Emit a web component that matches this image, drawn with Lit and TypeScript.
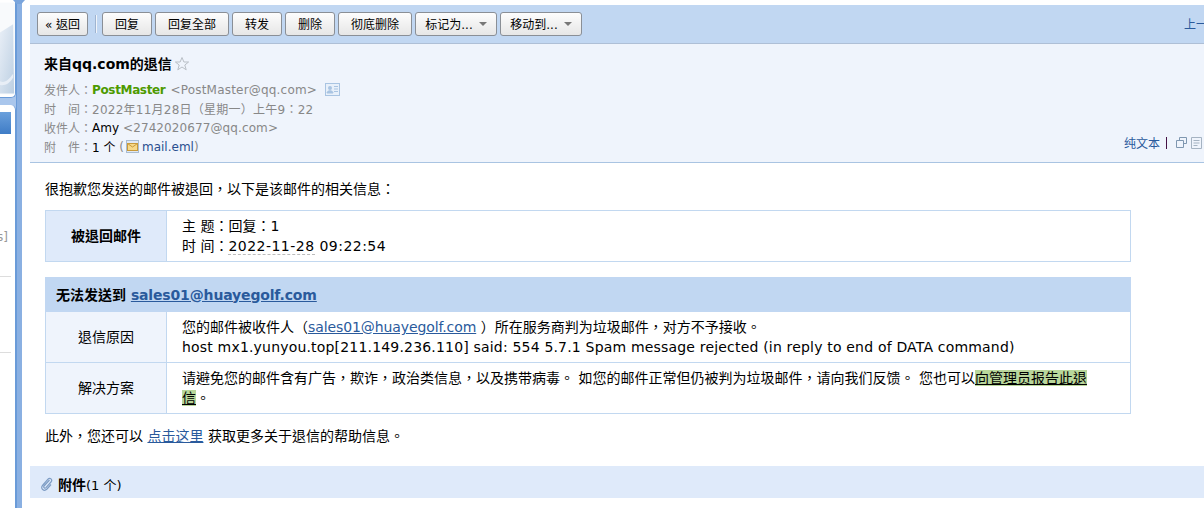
import { LitElement, html, css, svg } from "lit";
import { customElement } from "lit/decorators.js";

@customElement("app-root")
export class AppRoot extends LitElement {
  static styles = css`
    :host { display: block; width: 1204px; height: 508px; overflow: hidden; background: #fff; font-family: "DejaVu Sans", "Noto Sans CJK TC", sans-serif; font-size: 14px; color: #000; }
    .page { display: flex; height: 508px; }
    .side { width: 16px; flex: none; display: flex; flex-direction: column; background: #a9c6ec; }
    .art { height: 98px; flex: none; display: block; border-radius: 0 0 5px 0; border-right: 1px solid #6a9bd8; border-bottom: 1px solid #6a9bd8; box-sizing: border-box; background: #fff; }
    .sidenav { margin-top: 7px; flex: 1; background: #fff; border-radius: 0 5px 0 0; border-right: 1px solid #6a9bd8; }
    .sel { margin-top: 7px; height: 22px; width: 11px; background: linear-gradient(#6aa0dc, #3f7cc6); }
    .frag { margin-top: 95px; color: #999; font-size: 12px; line-height: 16px; width: 8px; overflow: hidden; display: flex; justify-content: flex-end; white-space: nowrap; }
    .sep { margin-top: 31px; height: 1px; width: 11px; background: #ddd; }
    .sep2 { margin-top: 75px; height: 1px; width: 11px; background: #ddd; }
    .rail { width: 6px; flex: none; background: #8ab0e2; border-left: 1px solid #6a9bd8; box-sizing: border-box; position: relative; }
    .flare { position: absolute; left: -4px; top: 0; width: 12px; height: 4px; background: #7aa5dc; clip-path: polygon(0 0, 100% 0, 70% 100%, 30% 100%); }
    .gap { width: 8px; flex: none; }
    .main { flex: 1; min-width: 0; padding-top: 5px; }
    .toolbar { height: 39px; box-sizing: border-box; background: #c1d7f2; border-bottom: 1px solid #aebfd6; display: flex; align-items: center; padding: 0 0 1px 7px; }
    .btn { height: 24px; box-sizing: border-box; border: 1px solid #8a8f96; border-radius: 3px; background: linear-gradient(#fdfdfd, #e6e6e6); font-size: 12px; display: flex; align-items: center; justify-content: center; margin-right: 3px; white-space: nowrap; flex: none; }
    .w51 { width: 51px; }
    .w50 { width: 50px; }
    .w74 { width: 74px; }
    .w82 { width: 82px; }
    .vsep { width: 1px; height: 18px; background: #f0f4fa; border-left: 1px solid #9fb4d0; margin: 0 5px 0 4px; flex: none; }
    .caret { width: 0; height: 0; border-left: 4px solid transparent; border-right: 4px solid transparent; border-top: 4px solid #777; margin-left: 6px; }
    .prev { margin-left: auto; color: #2a5a9c; font-size: 12px; width: 20px; overflow: hidden; white-space: nowrap; flex: none; }
    .head { height: 119px; box-sizing: border-box; background: #eff4fc; border-bottom: 1px solid #a9c4e2; padding: 10px 14px 0; position: relative; color: #888; font-size: 12px; }
    .title { display: flex; align-items: center; font-size: 14px; font-weight: bold; color: #000; height: 18px; margin-bottom: 8px; }
    .title svg { margin: 2px 0 0 2px; }
    .row { display: flex; align-items: center; height: 19px; white-space: nowrap; }
    .lab { color: #8a8a8a; }
    .name { color: #4d9a00; font-weight: bold; letter-spacing: -.35px; }
    .addr { letter-spacing: .2px; margin-left: 5px; }
    .addr2 { letter-spacing: .1px; margin-left: 4px; }
    .date { letter-spacing: .25px; }
    .blk { color: #000; }
    .lnk { color: #2a4f8f; }
    .card { margin-left: 8px; }
    .env { margin: 0 2px 0 1px; }
    .tools { position: absolute; right: 2px; bottom: 11px; display: flex; align-items: center; font-size: 12px; color: #2a5a9c; }
    .bar { width: 1px; height: 12px; background: #441144; margin: 0 9px 0 6px; }
    .tools svg { margin-right: 4px; }
    .tools svg:last-child { margin-right: 0; }
    .body { padding: 16px 15px 0; font-size: 14px; }
    .line { height: 20px; line-height: 20px; white-space: nowrap; }
    .tb { width: 1086px; border-collapse: collapse; font-size: 14px; line-height: 20px; table-layout: fixed; }
    .tb td { border: 1px solid #c2d8f0; padding: 0; box-sizing: border-box; }
    .t1 { margin-top: 11px; }
    .t2 { margin-top: 15px; }
    .c1 { width: 121px; }
    .r52 td { height: 51px; }
    .r51 td { height: 51px; }
    .r34 td { height: 34px; }
    .tb td.th { text-align: center; background: #eff4fc; }
    .tb td.th.b { font-weight: bold; background: #dfeafa; }
    .tb td.td { padding: 0 35px 0 15px; }
    .tb td.hdr { background: #c1d7f2; font-weight: bold; padding-left: 10px; border-color: #c1d7f2; }
    .hdr a { letter-spacing: -.15px; }
    a { color: #2a5a9c; text-decoration: underline; }
    .mail { letter-spacing: -.1px; }
    .smtp { letter-spacing: .185px; }
    .dash { border-bottom: 1px dashed #bbb; }
    .stamp { letter-spacing: .47px; }
    mark { background: #b9d79b; color: #000; text-decoration: underline; }
    .foot { margin-top: 12px; }
    .att { margin-top: 20px; background: #dfeafa; display: flex; align-items: center; height: 32px; font-size: 13px; padding: 4px 0 0 10px; box-sizing: border-box; }
    .att b { margin-left: 4px; font-size: 14px; }
    .attbody { height: 10px; margin: 0 0 0 2px; background: #fff; }
  `;

  render() {
    const star = svg`<path d="M8 1.500 9.900 6h4.700l-3.800 3 1.400 4.800L8 11l-4.200 2.800L5.200 9 1.400 6h4.700z" fill="none" stroke="#b9bfc6"/>`;
    return html`<div class="page">
      <div class="side">
        <svg class="art" width="16" height="98" viewBox="0 0 16 98">
          <defs><linearGradient id="g" x1="0" y1="0" x2="1" y2="1"><stop offset="0" stop-color="#e9eff7"/><stop offset="1" stop-color="#bccfe2"/></linearGradient></defs>
          <rect width="16" height="98" fill="#f8fafc"/>
          <path d="M0 32 14 23 15 97H0z" fill="url(#g)"/>
          <path d="M0 84c5 2 9-1 14-8v4c-4 7-9 9-14 8z" fill="#e8eef6"/>
        </svg>
        <div class="sidenav">
          <div class="sel"></div>
          <div class="frag">s]</div>
          <div class="sep"></div>
          <div class="sep2"></div>
        </div>
      </div>
      <div class="rail"><div class="flare"></div></div>
      <div class="gap"></div>
      <div class="main">
        <div class="toolbar">
          <div class="btn w51">« 返回</div>
          <div class="vsep"></div>
          <div class="btn w50">回复</div>
          <div class="btn w74">回复全部</div>
          <div class="btn w50">转发</div>
          <div class="btn w50">删除</div>
          <div class="btn w74">彻底删除</div>
          <div class="btn w82">标记为...<span class="caret"></span></div>
          <div class="btn w82">移动到...<span class="caret"></span></div>
          <div class="prev">上一</div>
        </div>
        <div class="head">
          <div class="title">来自qq.com的退信<svg width="16" height="16" viewBox="0 0 16 16">${star}</svg></div>
          <div class="row"><span class="lab">发件人：</span><span class="name">PostMaster</span><span class="addr">&lt;PostMaster@qq.com&gt;</span>
            <svg class="card" width="15" height="13" viewBox="0 0 15 13"><rect x=".5" y=".5" width="14" height="12" fill="#e8f0fa" stroke="#a9c4e2"/><circle cx="5" cy="5" r="2" fill="#a9c4e2"/><path d="M2 10c0-3 6-3 6 0zM9 3.500h4M9 6h4M9 8.500h4" fill="#a9c4e2" stroke="#a9c4e2"/></svg></div>
          <div class="row"><span class="lab">时　间：</span><span class="date">2022年11月28日（星期一）上午9：22</span></div>
          <div class="row"><span class="lab">收件人：</span><span class="blk">Amy</span><span class="addr2">&lt;2742020677@qq.com&gt;</span></div>
          <div class="row"><span class="lab">附　件：</span><span class="blk">1 个</span>&nbsp;(<svg class="env" width="15" height="15" viewBox="0 0 15 15"><rect x="1.500" y="1.500" width="12" height="12" fill="#dfe8f4" stroke="#a9bcd2"/><rect x="2.500" y="4.500" width="10" height="7" fill="#f6d98a" stroke="#c89a3a"/><path d="M2.500 4.500 7.500 8l5-3.500" fill="none" stroke="#c89a3a"/></svg><span class="lnk">mail.eml</span>)</div>
          <div class="tools">纯文本<span class="bar"></span>
            <svg width="11" height="11" viewBox="0 0 11 11"><path d="M3.500 3.500V.5h7v6H7.500M.5 3.500h7v7h-7z" fill="none" stroke="#7f97b0"/></svg>
            <svg width="11" height="12" viewBox="0 0 11 12"><path d="M.5.500h10v11h-10zM2.500 3.500h6M2.500 6h6M2.500 8.500h4" fill="none" stroke="#a5b3c2"/></svg>
          </div>
        </div>
        <div class="body">
          <div class="line">很抱歉您发送的邮件被退回，以下是该邮件的相关信息：</div>
          <table class="tb t1">
            <colgroup><col class="c1" /><col /></colgroup>
            <tr class="r52"><td class="th b">被退回邮件</td><td class="td">主 题：回复：1<br />时 间：<span class="stamp"><span class="dash">2022-11-28</span> 09:22:54</span></td></tr>
          </table>
          <table class="tb t2">
            <colgroup><col class="c1" /><col /></colgroup>
            <tr class="r34"><td class="hdr" colspan="2">无法发送到 <a>sales01@huayegolf.com</a></td></tr>
            <tr class="r51"><td class="th">退信原因</td><td class="td">您的邮件被收件人（<a class="mail">sales01@huayegolf.com</a> ）所在服务商判为垃圾邮件，对方不予接收。<br /><span class="smtp">host mx1.yunyou.top[211.149.236.110] said: 554 5.7.1 Spam message rejected (in reply to end of DATA command)</span></td></tr>
            <tr class="r52"><td class="th">解决方案</td><td class="td">请避免您的邮件含有广告，欺诈，政治类信息，以及携带病毒。 如您的邮件正常但仍被判为垃圾邮件，请向我们反馈。 您也可以<mark>向管理员报告此退信</mark>。</td></tr>
          </table>
          <div class="line foot">此外，您还可以 <a>点击这里</a> 获取更多关于退信的帮助信息。</div>
        </div>
        <div class="att">
          <svg width="14" height="14" viewBox="0 0 14 14"><path d="M9.500 3 4 9c-1 1.300.8 2.800 2 1.600l5-5.600c2-2.300-1-5-3-2.800L2.500 8.500c-2.500 3 1.500 6.500 4.500 3.500l4-4.500" fill="none" stroke="#7d9cc4" stroke-width="1.200"/></svg>
          <b>附件</b>(1 个)
        </div>
        <div class="attbody"></div>
      </div>
    </div>`;
  }
}
